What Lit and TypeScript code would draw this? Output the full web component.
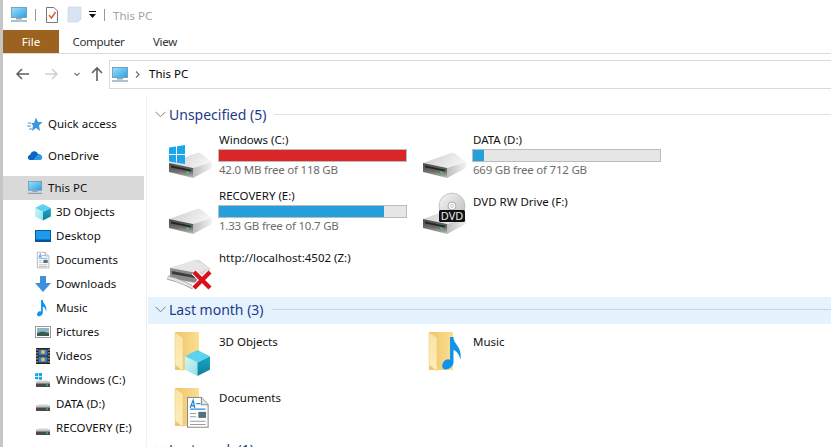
import { LitElement, html, css, svg } from "lit";
import { customElement } from "lit/decorators.js";

const defs = html`<svg class="defs" width="0" height="0" aria-hidden="true"><defs>
  <linearGradient id="scr" x1="0" y1="0" x2="1" y2="1"><stop offset="0" stop-color="#9be2fb"/><stop offset="1" stop-color="#2a9fe6"/></linearGradient>
  <linearGradient id="hddTop" x1="0" y1="0" x2="1" y2="0.3"><stop offset="0" stop-color="#cccccc"/><stop offset="1" stop-color="#f4f4f4"/></linearGradient>
  <linearGradient id="hddSide" x1="0" y1="0" x2="1" y2="0"><stop offset="0" stop-color="#bcbcbc"/><stop offset="1" stop-color="#f2f2f2"/></linearGradient>
  <linearGradient id="hddFront" x1="0" y1="0" x2="0" y2="1"><stop offset="0" stop-color="#4a4a4a"/><stop offset=".55" stop-color="#6a6a6a"/><stop offset="1" stop-color="#c0c0c0"/></linearGradient>
  <linearGradient id="fold" x1="0" y1="0" x2="1" y2="0"><stop offset="0" stop-color="#eec46a"/><stop offset="1" stop-color="#fbdf92"/></linearGradient>
  <linearGradient id="foldL" x1="0" y1="0" x2="0" y2="1"><stop offset="0" stop-color="#fbe3a0"/><stop offset="1" stop-color="#fdeebd"/></linearGradient>
  <linearGradient id="disc" x1="0" y1="0" x2="1" y2="1"><stop offset="0" stop-color="#f6f6f6"/><stop offset="1" stop-color="#bcbcbc"/></linearGradient>
  <linearGradient id="cubeL" x1="0" y1="0" x2="1" y2="1"><stop offset="0" stop-color="#d6f5f6"/><stop offset="1" stop-color="#8fdfe6"/></linearGradient>
  <linearGradient id="cubeR" x1="0" y1="0" x2="0" y2="1"><stop offset="0" stop-color="#1aa6c4"/><stop offset="1" stop-color="#0c7f9e"/></linearGradient>
</defs></svg>`;

const monitor = svg`<rect x="1.500" y="1.500" width="15" height="10" fill="url(#scr)" stroke="#6f8fa8" stroke-width=".8"/><path d="M6 12h6v1.500H6z" fill="#8fa5b8"/><path d="M1 15h16" stroke="#7d97ad" stroke-width="1.200"/>`;
const pcIcon = (w = 18) => html`<svg width=${w} height=${w} viewBox="0 0 18 18">${monitor}</svg>`;

const hddShape = svg`
  <path d="M3 27 31 17Q33 16.500 35 17.500L46 26 27 32Z" fill="url(#hddTop)"/>
  <path d="M27 32 46 26V32L27 42Z" fill="url(#hddSide)"/>
  <path d="M3 27 27 32V42L3 36Z" fill="url(#hddFront)"/>
  <path d="M5 29.500 25 33.800V35.500L5 31.500Z" fill="#262626"/>
  <rect x="20" y="35.500" width="3" height="2" fill="#2fd05a"/>`;
const winLogo = svg`<path d="M3 4.500 10 3.500V11H3ZM11 3.300 19 2V11H11ZM3 12H10V19.500L3 18.500ZM11 12H19V21L11 19.700Z" fill="#19a6ea"/>`;
const hddL = (win = false) => html`<svg class="big" viewBox="0 0 48 48">${hddShape}${win ? svg`<g transform="translate(0,7)">${winLogo}</g>` : ""}</svg>`;
const dvdL = html`<svg class="big" viewBox="0 0 48 48">${hddShape}
  <circle cx="32" cy="14" r="13" fill="url(#disc)" stroke="#a8a8a8" stroke-width=".6"/><circle cx="32" cy="14" r="4" fill="#fafafa" stroke="#aaa"/><circle cx="32" cy="14" r="1.500" fill="#fff" stroke="#999" stroke-width=".5"/>
  <rect x="19" y="18" width="26" height="12" rx="1.500" fill="#111"/><text x="32" y="28" text-anchor="middle" font-size="11" fill="#e8e8e8" font-family="Noto Sans, sans-serif">DVD</text></svg>`;
const netL = html`<svg class="big" viewBox="0 0 48 48">
  <path d="M4 20 29 12Q31 11.500 33 12L44 20V28L31 36 4 30Z" fill="#d4d4d4"/><path d="M4 20 30 12 44 20 31 25Z" fill="#e6e6e6"/>
  <path d="M4 20 31 25V35L4 30Z" fill="#8a8a8a"/><path d="M6 23 29 27.500V30L6 26Z" fill="#3c3c3c"/>
  <path d="M1.500 29.500 10 32 20 36 27 39.500" fill="none" stroke="#9a9a9a" stroke-width="4"/><path d="M1.500 29.500 10 32 20 36 27 39.500" fill="none" stroke="#e4e4e4" stroke-width="2.500"/>
  <path d="M28 24 44 40M44 24 28 40" stroke="#fff" stroke-width="6.500"/>
  <path d="M28 24 44 40M44 24 28 40" stroke="#d8121c" stroke-width="4.500"/></svg>`;

const folderBase = svg`
  <path d="M9 0H33V38H9Z" fill="url(#fold)"/>
  <path d="M9 0 17 6V39L9 33Z" fill="url(#foldL)" stroke="#e9c672" stroke-width=".5"/>`;
const cube = (x: number, y: number, s = 1) => svg`<g transform="translate(${x},${y}) scale(${s})">
  <path d="M12 0 24 6 12 12 0 6Z" fill="#5ad3ee"/><path d="M0 6 12 12V25L0 19Z" fill="url(#cubeL)"/><path d="M12 12 24 6V19L12 25Z" fill="url(#cubeR)"/></g>`;
const docArt = (x: number, y: number, sx = 1, sy = sx) => svg`<g transform="translate(${x},${y}) scale(${sx},${sy})">
  <path d="M.5.5H14L20.500 7V27.500H.5Z" fill="#fff" stroke="#8a8a8a"/><path d="M14 .5V7H20.500" fill="#e4e4e4" stroke="#8a8a8a"/>
  <path d="M9 6H13M3 11H18" stroke="#2a8ad4" stroke-width="1.100"/><path d="M3 15H9M3 18H9M3 22H18M3 25H18" stroke="#9a9a9a" stroke-width="1"/>
  <rect x="11" y="13.500" width="7.500" height="5.500" fill="#56707e"/><path d="M3 10 6 3 7.500 10M4 8H7" fill="none" stroke="#2a8ad4" stroke-width="1.300"/></g>`;
const noteArt = (x: number, y: number, s = 1) => svg`<g transform="translate(${x},${y}) scale(${s})"><path d="M7 0H10C10 7 18 8 16 20 15 14 12 12 10 11V22C10 26 5 29 2 28-1 27 0 22 3 20 5 19 6 19 7 20Z" fill="#0f93ea"/></g>`;
const folderL = (art: unknown) => html`<svg class="big" viewBox="0 0 48 48">${folderBase}${art}</svg>`;

const star = html`<svg width="16" height="16" viewBox="0 0 16 16"><path d="M9 1.500 11 6H15.500L12 9.500 13 15 9 12 5 15 6 9.500 4 7H7Z" fill="#3d96dc"/><path d="M1 7H4M0 10H4M2 13H5" stroke="#3d96dc"/></svg>`;
const cloud = html`<svg width="16" height="16" viewBox="0 0 18 18"><path d="M4 13.500C1.500 13.500.5 11.500 1 10 1.500 8.500 2.500 8 3.500 8 4 5 7 3 9.500 4 11 4.500 12 5.500 12.500 7 15 6.800 17 8.500 17 10.500 17 12.500 15.500 13.500 14 13.500Z" fill="#0f64c0"/><path d="M7 13.500 12.500 7C15 6.800 17 8.500 17 10.500 17 12.500 15.500 13.500 14 13.500Z" fill="#2a9be8"/></svg>`;
const s16 = (c: unknown) => html`<svg width="16" height="16" viewBox="0 0 16 16">${c}</svg>`;
const desk = s16(svg`<rect x=".5" y="2.500" width="15" height="11" fill="#1a9bf0" stroke="#0d5a9e"/><rect x="1" y="11.500" width="14" height="2" fill="#0f4f90"/>`);
const dl = s16(svg`<path d="M5 0H11V7H16L8 16 0 7H5Z" fill="#3e8fdc"/>`);
const pics = s16(svg`<rect x=".5" y="2.500" width="15" height="11" fill="#fff" stroke="#9a9a9a"/><rect x="2" y="4" width="12" height="8" fill="#8cb8c8"/><path d="M2 9 7 7.500 14 9V12H2Z" fill="#3c5a50"/>`);
const vids = s16(svg`<rect x="1" y="0" width="14" height="16" fill="#222"/><rect x="3.500" y="1.500" width="9" height="6" fill="#3b78c4"/><rect x="3.500" y="8.500" width="9" height="6" fill="#3b78c4"/><circle cx="8" cy="4" r="2" fill="#e8c040"/><circle cx="8" cy="11.500" r="2" fill="#e8c040"/><path d="M2 1V15M14 1V15" stroke="#ddd" stroke-dasharray="1.500 1.500"/>`);
const hddS = (win = false) => s16(svg`
  <path d="M1 10 4 8.500H13L15 10V14H1Z" fill="#dadada"/><rect x="1" y="11" width="14" height="4" fill="#4a4a4a"/><rect x="1" y="9.500" width="14" height="2" fill="#c4c4c4"/><rect x="11" y="12.500" width="2" height="1.300" fill="#36d060"/>
  ${win ? svg`<path d="M0 1.500 3 1V4H0ZM3.700 1H7V4H3.700ZM0 4.700H3V7.500L0 7ZM3.700 4.700H7V8L3.700 7.500Z" fill="#19a6ea"/>` : ""}`);

const chev = html`<svg class="chev" width="11" height="7" viewBox="0 0 11 7"><path d="M.5.800 5.500 5.800 10.500.8" fill="none" stroke="#7b7b7b" stroke-width="1"/></svg>`;

@customElement("app-root")
export class AppRoot extends LitElement {
  static styles = css`
    :host { display: block; width: 831px; height: 447px; overflow: hidden; background: #fff; font-family: "Noto Sans", sans-serif; font-size: 11.5px; color: #000; border-left: 3px solid #c6c6c6; box-sizing: border-box; position: relative; }
    .defs { position: absolute; }
    svg { display: block; flex: none; overflow: visible; }
    .title { height: 30px; display: flex; align-items: center; padding-left: 7px; }
    .sep { width: 1px; height: 12px; background: #9a9a9a; }
    .t-name { color: #a3a3a3; margin-left: 8px; }
    .tabs { height: 23px; display: flex; border-bottom: 1px solid #dadada; box-sizing: content-box; }
    .tab { display: flex; align-items: center; justify-content: center; height: 23px; color: #333; letter-spacing: -0.3px; }
    .tab.file { width: 56px; background: #9c6320; color: #fff; letter-spacing: 0; }
    .tab.comp { width: 79px; }
    .tab.view { width: 54px; }
    .nav { height: 42px; display: flex; align-items: flex-start; padding-top: 6px; box-sizing: border-box; }
    .btns { width: 106px; height: 28px; display: flex; align-items: center; flex: none; padding-left: 13px; box-sizing: border-box; }
    .addr { flex: 1; height: 29px; border: 1px solid #d9d9d9; border-right: none; display: flex; align-items: center; padding-left: 1px; box-sizing: border-box; }
    .addr .crumb { margin: 0 0 2px 9px; }
    .main { display: flex; height: 351px; }
    .side { border-right: 1px solid #f0f0f0; padding: 16px 2px 0 0; margin-right: 1px; width: 141px; flex: none; }
    .row { height: 24px; display: flex; align-items: center; gap: 5px; white-space: nowrap; color: #111; }
    .row span { margin-bottom: 2px; }
    .row.l1 { padding-left: 24px; margin-bottom: 8px; }
    .row.l1.sel { background: #d9d9d9; margin-bottom: 0; }
    .row.l2 { padding-left: 32px; }
    .content { flex: 1; padding-top: 6px; min-width: 0; }
    .head { height: 27px; display: flex; align-items: center; padding: 0 0 2px 7px; box-sizing: border-box; color: #1f3a8a; font-size: 14px; white-space: nowrap; }
    .head.on { background: #e5f3ff; }
    .head .lbl { margin-left: 3px; }
    .head .line { flex: 1; height: 1px; background: #e2e2e2; margin-left: 8px; }
    .head.on .line { background: #c5d6e6; }
    .grid { display: grid; grid-template-columns: 254px 254px; padding-left: 18px; margin-top: 3px; }
    .grid.a { grid-template-rows: 56px 56px 53px; }
    .grid.b { grid-template-rows: 56px 53px; margin-top: 4px; }
    .tile { display: flex; gap: 5px; min-width: 0; }
    .big { width: 48px; height: 48px; margin-top: 4px; }
    .name { line-height: 16px; color: #111; white-space: nowrap; }
    .name.one { margin-top: 6px; }
    .bar { width: 189px; height: 13px; border: 1px solid #bcbcbc; background: #e6e6e6; box-sizing: border-box; margin: 1px 0 0 -1px; }
    .fill { height: 100%; background: #26a0da; }
    .fill.red { background: #da2626; }
    .sub { line-height: 16px; color: #6d6d6d; white-space: nowrap; letter-spacing: -0.22px; }
  `;

  private navItem(icon: unknown, name: string, l1 = false, sel = false) {
    return html`<div class="row ${l1 ? "l1" : "l2"} ${sel ? "sel" : ""}">${icon}<span>${name}</span></div>`;
  }

  private drive(icon: unknown, name: string, pct: number, sub: string, red = false) {
    return html`<div class="tile">${icon}<div>
      <div class="name">${name}</div>
      <div class="bar"><div class="fill ${red ? "red" : ""}" style="width:${pct}%"></div></div>
      <div class="sub">${sub}</div></div></div>`;
  }

  private single(icon: unknown, name: string) {
    return html`<div class="tile">${icon}<div class="name one">${name}</div></div>`;
  }

  render() {
    return html`${defs}
      <div class="title">
        ${pcIcon(18)}
        <div class="sep" style="margin-left:7px"></div>
        <svg style="margin-left:10px" width="12" height="16" viewBox="0 0 12 16"><path d="M.5.5H8L11.500 4V15.500H.5Z" fill="#fff" stroke="#777"/><path d="M3 8 5.500 11 9.500 5" fill="none" stroke="#e8562a" stroke-width="1.400"/></svg>
        <svg style="margin-left:10px" width="13" height="16" viewBox="0 0 13 16"><path d="M0 0H13V12L10 15H0Z" fill="#d9e4f3" stroke="#c5d3e6" stroke-width=".6"/></svg>
        <svg style="margin-left:8px" width="7" height="8" viewBox="0 0 7 8"><path d="M0 0H7V1H0ZM0 3H7L3.500 7Z" fill="#111"/></svg>
        <div class="sep" style="margin-left:8px"></div>
        <span class="t-name">This PC</span>
      </div>
      <div class="tabs">
        <div class="tab file">File</div>
        <div class="tab comp">Computer</div>
        <div class="tab view">View</div>
      </div>
      <div class="nav">
        <div class="btns">
          <svg width="13" height="12" viewBox="0 0 13 12"><path d="M6 1 1 6 6 11M1 6H13" fill="none" stroke="#5f5f5f" stroke-width="1.500"/></svg>
          <svg style="margin-left:16px" width="13" height="12" viewBox="0 0 13 12"><path d="M7 1 12 6 7 11M0 6H12" fill="none" stroke="#cfcfcf" stroke-width="1.500"/></svg>
          <svg style="margin-left:16px" width="6" height="5" viewBox="0 0 6 5"><path d="M.5 1 3 3.500 5.500 1" fill="none" stroke="#777" stroke-width="1.200"/></svg>
          <svg style="margin-left:11px" width="12" height="14" viewBox="0 0 12 14"><path d="M1 6 6 1 11 6M6 1V14" fill="none" stroke="#5f5f5f" stroke-width="1.600"/></svg>
        </div>
        <div class="addr">
          ${pcIcon(18)}
          <svg style="margin-left:6px" width="5" height="7" viewBox="0 0 5 7"><path d="M1 .5 4 3.500 1 6.500" fill="none" stroke="#6f6f6f" stroke-width="1.200"/></svg>
          <span class="crumb">This PC</span>
        </div>
      </div>
      <div class="main">
        <div class="side">
          ${this.navItem(star, "Quick access", true)}
          ${this.navItem(cloud, "OneDrive", true)}
          ${this.navItem(pcIcon(16), "This PC", true, true)}
          ${this.navItem(s16(cube(0, 0, 0.66)), "3D Objects")}
          ${this.navItem(desk, "Desktop")}
          ${this.navItem(s16(docArt(2, 0, 0.58)), "Documents")}
          ${this.navItem(dl, "Downloads")}
          ${this.navItem(s16(noteArt(2, 0, 0.58)), "Music")}
          ${this.navItem(pics, "Pictures")}
          ${this.navItem(vids, "Videos")}
          ${this.navItem(hddS(true), "Windows (C:)")}
          ${this.navItem(hddS(), "DATA (D:)")}
          ${this.navItem(hddS(), "RECOVERY (E:)")}
        </div>
        <div class="content">
          <div class="head">${chev}<span class="lbl">Unspecified (5)</span><div class="line"></div></div>
          <div class="grid a">
            ${this.drive(hddL(true), "Windows (C:)", 100, "42.0 MB free of 118 GB", true)}
            ${this.drive(hddL(), "DATA (D:)", 6, "669 GB free of 712 GB")}
            ${this.drive(hddL(), "RECOVERY (E:)", 88, "1.33 GB free of 10.7 GB")}
            ${this.single(dvdL, "DVD RW Drive (F:)")}
            ${this.single(netL, "http://localhost:4502 (Z:)")}
          </div>
          <div class="head on">${chev}<span class="lbl">Last month (3)</span><div class="line"></div></div>
          <div class="grid b">
            ${this.single(folderL(cube(19, 18, 1.04)), "3D Objects")}
            ${this.single(folderL(noteArt(22, 5, 1.15)), "Music")}
            ${this.single(folderL(docArt(21, 9, 1.03, 1.1)), "Documents")}
          </div>
          <div class="head">${chev}<span class="lbl">Last week (1)</span><div class="line"></div></div>
        </div>
      </div>`;
  }
}
